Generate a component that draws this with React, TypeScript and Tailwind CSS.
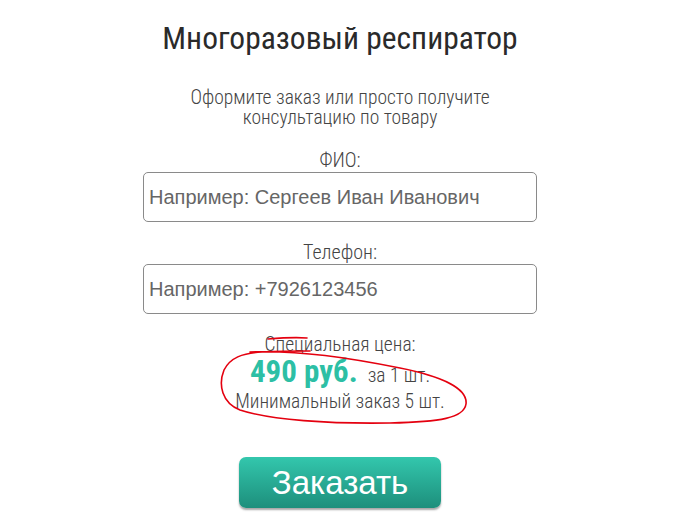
import React from "react";

const cond = { fontFamily: "'Roboto Condensed', 'Roboto', 'Noto Sans', sans-serif", fontStretch: "condensed" } as React.CSSProperties;
const arial = { fontFamily: "'Liberation Sans', Arial, sans-serif" } as React.CSSProperties;

function Field({ label, placeholder }: { label: string; placeholder: string }) {
  return (
    <div className="flex flex-col items-center">
      <div className="text-[20px] leading-[20px] font-light text-[#444]" style={cond}>{label}</div>
      <input
        className="mt-[2px] w-[394px] h-[50px] rounded-[5px] border border-[#8a8a8a] px-[5px] text-[20px] text-[#555] placeholder:text-[#666] outline-none"
        style={arial}
        placeholder={placeholder}
      />
    </div>
  );
}

export default function App() {
  return (
    <div className="relative w-[700px] h-[531px] bg-white flex flex-col items-center pr-[20px] overflow-hidden" style={cond}>
      <h1 className="pt-[21px] text-[31.5px] leading-[36px] text-[#2a2a2a]">Многоразовый респиратор</h1>
      <p className="mt-[31px] text-[19.5px] leading-[20px] font-light text-[#444] text-center w-[340px]">
        Оформите заказ или просто получите консультацию по товару
      </p>
      <div className="mt-[22px]">
        <Field label="ФИО:" placeholder="Например: Сергеев Иван Иванович" />
      </div>
      <div className="mt-[20px]">
        <Field label="Телефон:" placeholder="Например: +7926123456" />
      </div>
      <div className="mt-[21px] flex flex-col items-center text-[#444] font-light">
        <div className="text-[19.5px] leading-[20px]">Специальная цена:</div>
        <div className="mt-[2px] flex items-baseline gap-[10px]">
          <span className="text-[31px] leading-[30px] font-bold text-[#2dbfa5]">490 руб.</span>
          <span className="text-[19.5px] leading-[20px]">за 1 шт.</span>
        </div>
        <div className="mt-[5px] text-[19.5px] leading-[20px]">Минимальный заказ 5 шт.</div>
      </div>
      <button
        className="mt-[45px] w-[202px] h-[51px] rounded-[7px] bg-gradient-to-b from-[#33c7ad] to-[#1d8f7c] text-white text-[33px] leading-none shadow-[0_2px_2px_rgba(0,0,0,0.35)]"
        style={arial}
      >
        Заказать
      </button>
      <svg
        className="absolute left-0 top-0 pointer-events-none"
        width={700}
        height={531}
        viewBox="0 0 700 531"
        fill="none"
        stroke="#e4000f"
        strokeWidth={1.6}
        strokeLinecap="round"
      >
        <path d="M268 339 C280 338 295 337 307 338" />
        <path d="M250 352 C300 350 350 358 400 368 C440 376 468 388 466 404 C464 418 440 422 390 423 C330 424 270 420 240 410 C222 403 218 385 224 370 C230 358 242 353 262 352 C280 351 295 351 310 351" />
      </svg>
    </div>
  );
}
